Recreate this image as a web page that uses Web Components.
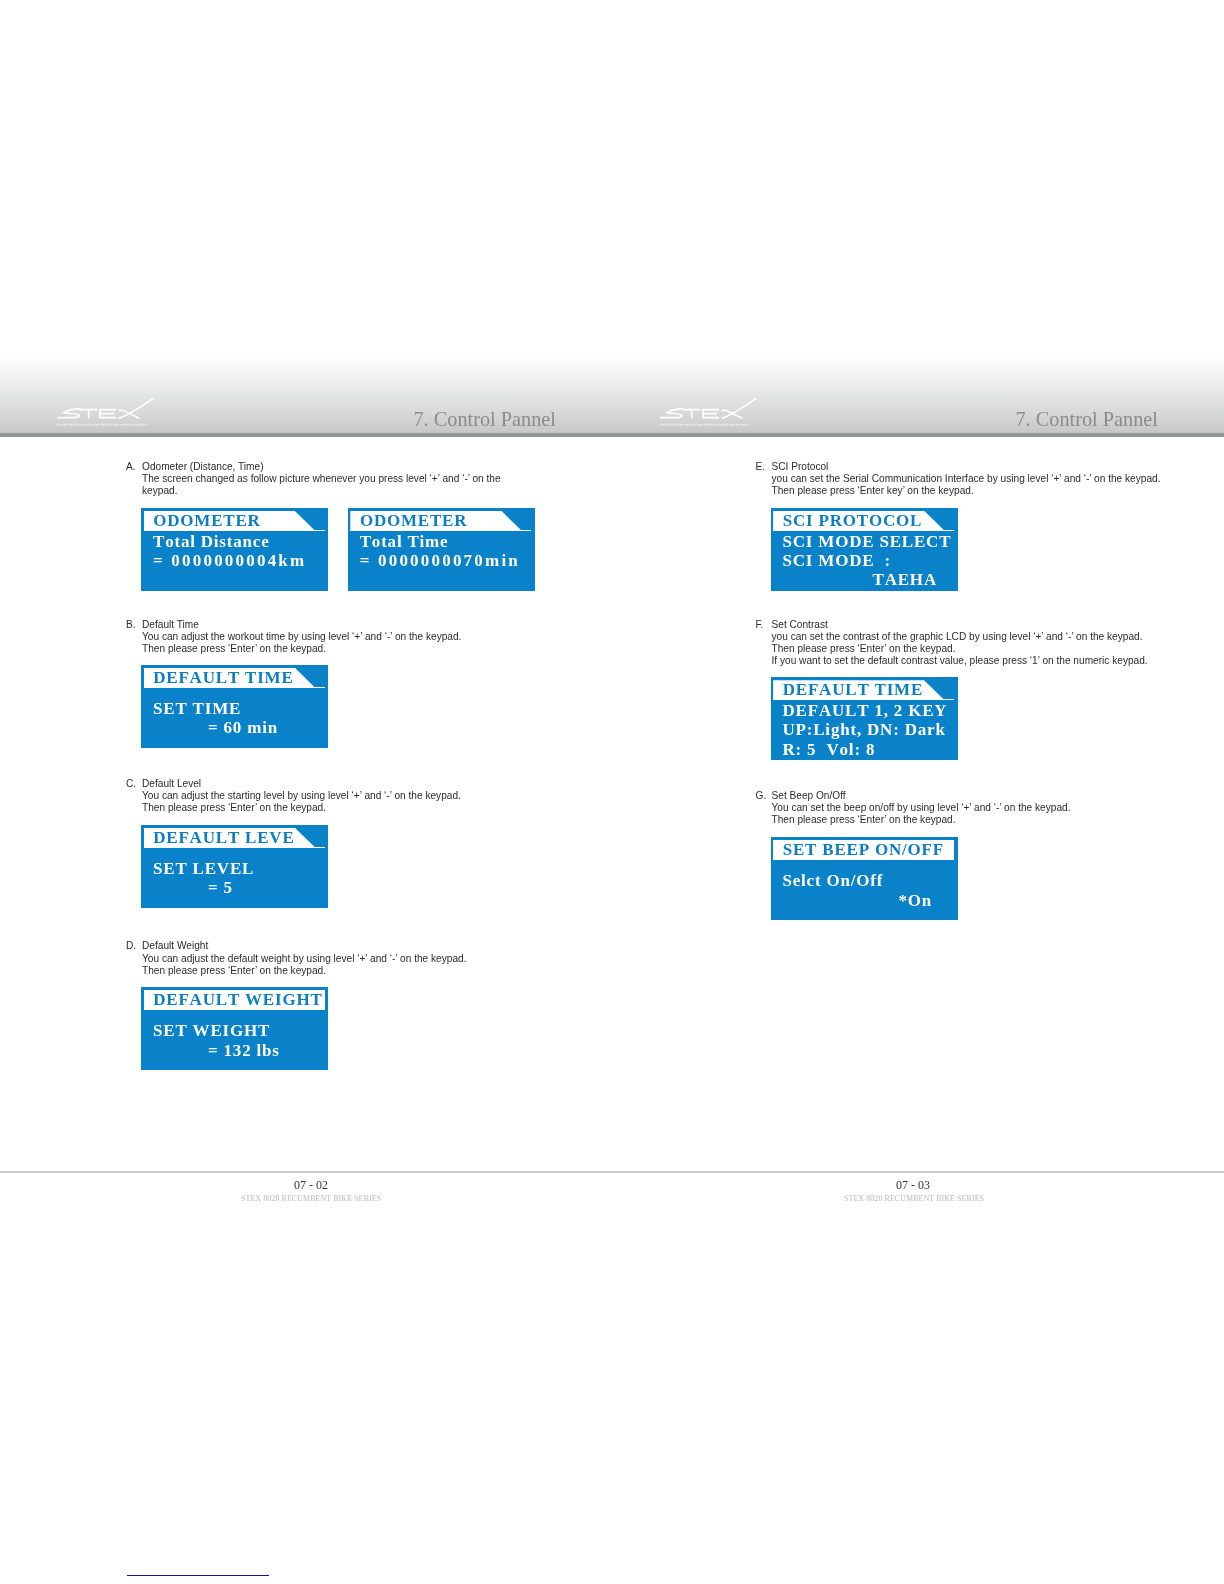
<!DOCTYPE html>
<html lang="en">
<head>
<meta charset="utf-8">
<title>7. Control Pannel</title>
<style>
   html, body { margin: 0; padding: 0; background: #fff; }
   body { width: 1224px; height: 1584px; overflow: hidden; }
   .spread { display: grid; grid-template-columns: 612px 612px; filter: blur(0.35px); }
</style>
</head>
<body>

<div class="spread">
   <manual-page number="07 - 02" logo-left="40" title-right="56" content-left="126" foot-left="294" sub-left="241">
      <manual-step letter="A" style="--top: 23.7px; --gap: 10.8px">
         Odometer (Distance, Time)<br>
         The screen changed as follow picture whenever you press level ‘+’ and ‘-’ on the<br>
         keypad.
         <lcd-screen slot="screen" heading="ODOMETER">
            <lcd-line>Total Distance</lcd-line>
            <lcd-line spacing="2.2">= 0000000004km</lcd-line>
         </lcd-screen>
         <lcd-screen slot="screen" heading="ODOMETER">
            <lcd-line>Total Time</lcd-line>
            <lcd-line spacing="2.2">= 0000000070min</lcd-line>
         </lcd-screen>
      </manual-step>
      <manual-step letter="B" style="--top: 28px; --gap: 9.3px">
         Default Time<br>
         You can adjust the workout time by using level ‘+’ and ‘-’ on the keypad.<br>
         Then please press ‘Enter’ on the keypad.
         <lcd-screen slot="screen" heading="DEFAULT TIME">
            <lcd-line></lcd-line>
            <lcd-line>SET TIME</lcd-line>
            <lcd-line indent="55">= 60 min</lcd-line>
         </lcd-screen>
      </manual-step>
      <manual-step letter="C" style="--top: 30.5px">
         Default Level<br>
         You can adjust the starting level by using level ‘+’ and ‘-’ on the keypad.<br>
         Then please press ‘Enter’ on the keypad.
         <lcd-screen slot="screen" heading="DEFAULT LEVE">
            <lcd-line></lcd-line>
            <lcd-line>SET LEVEL</lcd-line>
            <lcd-line indent="55">= 5</lcd-line>
         </lcd-screen>
      </manual-step>
      <manual-step letter="D" style="--top: 32.8px">
         Default Weight<br>
         You can adjust the default weight by using level ‘+’ and ‘-’ on the keypad.<br>
         Then please press ‘Enter’ on the keypad.
         <lcd-screen slot="screen" heading="DEFAULT WEIGHT" full>
            <lcd-line></lcd-line>
            <lcd-line>SET WEIGHT</lcd-line>
            <lcd-line indent="55">= 132 lbs</lcd-line>
         </lcd-screen>
      </manual-step>
      <stray-rule slot="after"></stray-rule>
   </manual-page>

   <manual-page number="07 - 03" logo-left="31" title-right="66" content-left="143.5" foot-left="284" sub-left="232">
      <manual-step letter="E" style="--top: 23.7px; --gap: 10.8px">
         SCI Protocol<br>
         you can set the Serial Communication Interface by using level ‘+’ and ‘-’ on the keypad.<br>
         Then please press ‘Enter key’ on the keypad.
         <lcd-screen slot="screen" heading="SCI PROTOCOL">
            <lcd-line>SCI MODE SELECT</lcd-line>
            <lcd-line>SCI MODE&nbsp; :</lcd-line>
            <lcd-line indent="90">TAEHA</lcd-line>
         </lcd-screen>
      </manual-step>
      <manual-step letter="F" style="--top: 28px; --gap: 9.8px">
         Set Contrast<br>
         you can set the contrast of the graphic LCD by using level ‘+’ and ‘-’ on the keypad.<br>
         Then please press ‘Enter’ on the keypad.<br>
         If you want to set the default contrast value, please press ‘1’ on the numeric keypad.
         <lcd-screen slot="screen" heading="DEFAULT TIME">
            <lcd-line>DEFAULT 1, 2 KEY</lcd-line>
            <lcd-line>UP:Light, DN: Dark</lcd-line>
            <lcd-line>R: 5&nbsp; Vol: 8</lcd-line>
         </lcd-screen>
      </manual-step>
      <manual-step letter="G" style="--top: 29.9px; --gap: 10.3px">
         Set Beep On/Off<br>
         You can set the beep on/off by using level ‘+’ and ‘-’ on the keypad.<br>
         Then please press ‘Enter’ on the keypad.
         <lcd-screen slot="screen" heading="SET BEEP ON/OFF" full>
            <lcd-line></lcd-line>
            <lcd-line>Selct On/Off</lcd-line>
            <lcd-line indent="116">*On</lcd-line>
         </lcd-screen>
      </manual-step>
   </manual-page>
</div>

<script>
// one line of text on the blue screen, an empty one is a half row spacer
class LcdLine extends HTMLElement {
   constructor() {
      super()
      this.attachShadow({ mode: 'open' })
      this.shadowRoot.innerHTML = `
      <style>
         :host {
            display: block;
            height: 19.3px;
            line-height: 19.3px;
            white-space: nowrap;
         }
         :host(:empty) { height: 10.6px; }
      </style>
      <slot></slot>`
   }

   connectedCallback() {
      if (this.hasAttribute('indent')) this.style.paddingLeft = this.getAttribute('indent') + 'px'
      if (this.hasAttribute('spacing')) this.style.letterSpacing = this.getAttribute('spacing') + 'px'
   }
}

// blue LCD picture with the white title tab
const templateLcd = document.createElement('template')
templateLcd.innerHTML = `
<style>
   :host {
      display: block;
      width: 187px;
      height: 83.2px;
      background: #0a82c9;
      color: #fff;
      font: bold 17px 'Liberation Serif', serif;
      font-kerning: none;
      letter-spacing: 0.8px;
      box-sizing: border-box;
      padding-top: 3px;
      overflow: hidden;
   }
   .tab {
      margin-left: 2.6px;
      width: 181px;
      height: 20px;
      background: linear-gradient(#fff, #fff) left bottom / 100% 1px no-repeat;
   }
   .band {
      height: 19.6px;
      padding-left: 9.6px;
      line-height: 20px;
      color: #0b7dc3;
      background: #fff;
      white-space: nowrap;
      overflow: hidden;
      clip-path: polygon(0 0, 151px 0, 171px 100%, 0 100%);
   }
   :host([full]) .band { clip-path: none; }
   .lines { margin-top: 1px; padding-left: 12px; }
</style>
<div class="tab"><div class="band"></div></div>
<div class="lines"><slot></slot></div>`

class LcdScreen extends HTMLElement {
   constructor() {
      super()
      this.attachShadow({ mode: 'open' })
      this.shadowRoot.appendChild(templateLcd.content.cloneNode(true))
   }

   connectedCallback() {
      this.shadowRoot.querySelector('.band').textContent = this.getAttribute('heading') ?? ''
   }
}

// lettered paragraph followed by its screens
const templateStep = document.createElement('template')
templateStep.innerHTML = `
<style>
   :host {
      display: grid;
      grid-template-columns: 16px auto;
      margin-top: var(--top, 0);
      font: 10.15px/12.1px 'Liberation Sans', sans-serif;
      color: #2b2b2b;
      white-space: nowrap;
   }
   .screens {
      display: flex;
      gap: 19.7px;
      margin: var(--gap, 10px) 0 0 -1px;
   }
</style>
<div class="letter"></div>
<div>
   <div><slot></slot></div>
   <div class="screens"><slot name="screen"></slot></div>
</div>`

class ManualStep extends HTMLElement {
   constructor() {
      super()
      this.attachShadow({ mode: 'open' })
      this.shadowRoot.appendChild(templateStep.content.cloneNode(true))
   }

   connectedCallback() {
      this.shadowRoot.querySelector('.letter').textContent = this.getAttribute('letter') + '.'
   }
}

// page of the manual: header band, steps, footer
const templatePage = document.createElement('template')
templatePage.innerHTML = `
<style>
   :host {
      display: flex;
      flex-direction: column;
      height: 1584px;
   }
   header {
      margin-top: 359px;
      height: 74px;
      display: flex;
      justify-content: space-between;
      align-items: flex-end;
      border-bottom: 4px solid #959696;
      background: linear-gradient(#fdfdfd, #ececec 35%, #d3d4d4 80%, #c6c7c7);
   }
   header svg { display: block; width: 130px; height: 48px; }
   h1 {
      margin: 0 0 2px;
      font: normal 20.3px/24px 'Liberation Serif', serif;
      color: #8b8b8b;
   }
   main { height: 734px; }
   footer {
      border-top: 2px solid #c9c9c9;
      font-family: 'Liberation Serif', serif;
   }
   .num { margin-top: 5px; font-size: 12px; line-height: 14px; color: #333; }
   .sub { margin-top: 1px; font-size: 8px; line-height: 11px; letter-spacing: 0.05px; color: #b9b9b9; white-space: nowrap; }
</style>
<header>
   <svg viewBox="0 0 390 144" fill="none" stroke="#fff" stroke-width="5" aria-hidden="true">
      <path d="M122 71 C100 72 82 75 72 83 C84 86 102 85 112 88 C122 91 118 97 104 98 L52 98"/>
      <path d="M118 74 H172 M146 76 V100"/>
      <path d="M178 74 H228 M178 86 H222 M178 98 H228 M180 74 V98"/>
      <path d="M236 76 H248 L298 100 M236 100 C270 88 305 64 340 40"/>
      <path d="M50 119 H320" stroke-width="5" stroke-dasharray="9 2 5 3" opacity=".55"/>
   </svg>
   <h1>7. Control Pannel</h1>
</header>
<main><slot></slot></main>
<footer>
   <div class="num"></div>
   <div class="sub">STEX 8020 RECUMBENT BIKE SERIES</div>
</footer>
<slot name="after"></slot>`

class ManualPage extends HTMLElement {
   constructor() {
      super()
      this.attachShadow({ mode: 'open' })
      this.shadowRoot.appendChild(templatePage.content.cloneNode(true))
   }

   connectedCallback() {
      const root = this.shadowRoot
      root.querySelector('header').style.paddingLeft = this.getAttribute('logo-left') + 'px'
      root.querySelector('header').style.paddingRight = this.getAttribute('title-right') + 'px'
      root.querySelector('main').style.paddingLeft = this.getAttribute('content-left') + 'px'
      root.querySelector('.num').textContent = this.getAttribute('number')
      root.querySelector('.num').style.paddingLeft = this.getAttribute('foot-left') + 'px'
      root.querySelector('.sub').style.paddingLeft = this.getAttribute('sub-left') + 'px'
   }
}

// the short blue rule at the foot of the left page
class StrayRule extends HTMLElement {
   constructor() {
      super()
      this.attachShadow({ mode: 'open' })
      this.shadowRoot.innerHTML = `
      <style>
         :host {
            display: block;
            width: 142px;
            height: 1px;
            margin: 371px 0 0 127px;
            background: #14149a;
         }
      </style>`
   }
}

function register() {
   customElements.define('lcd-line', LcdLine)
   customElements.define('lcd-screen', LcdScreen)
   customElements.define('manual-step', ManualStep)
   customElements.define('manual-page', ManualPage)
   customElements.define('stray-rule', StrayRule)
}

register()
</script>
</body>
</html>
